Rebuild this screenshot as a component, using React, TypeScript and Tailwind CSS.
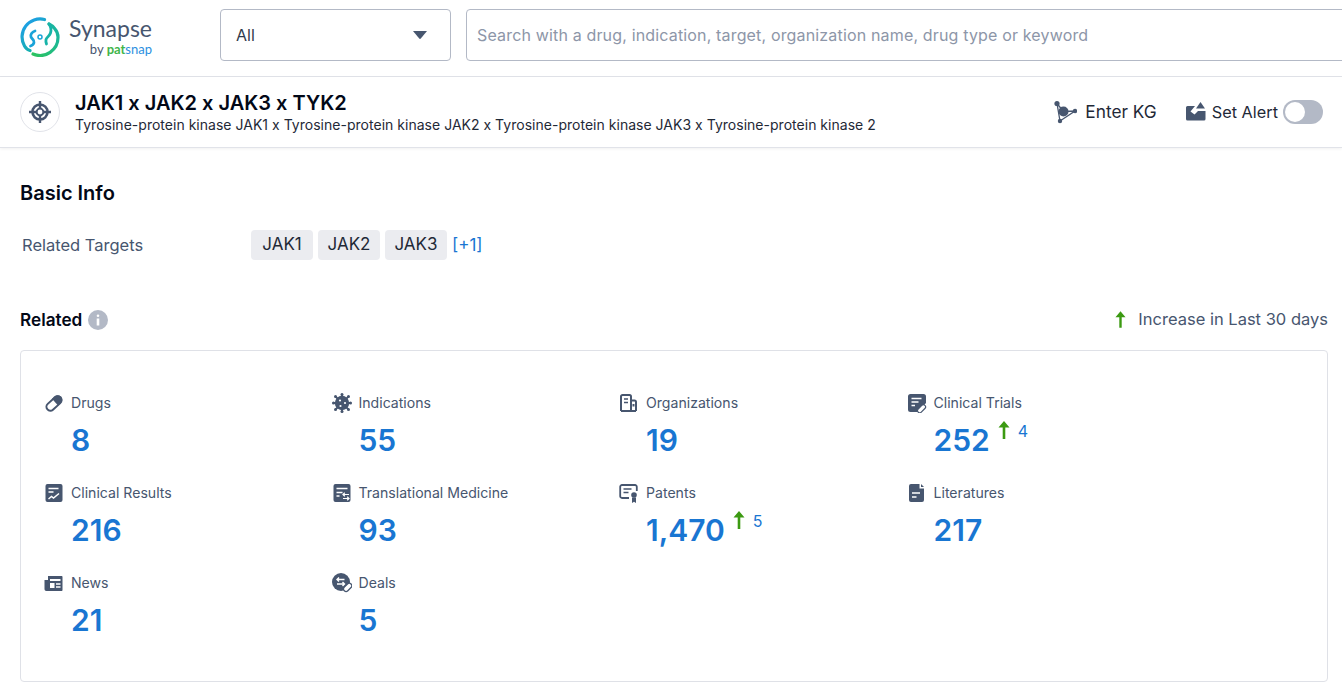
import type { ReactNode } from "react"

function Logo() {
  return (
    <svg width="40" height="40" viewBox="0 0 40 40" fill="none">
      <defs>
        <linearGradient id="logo-a" x1="0" y1="0" x2="0.6" y2="1">
          <stop offset="0" stopColor="#1e9bf0" />
          <stop offset="1" stopColor="#17b3a8" />
        </linearGradient>
        <linearGradient id="logo-b" x1="1" y1="0" x2="0" y2="1">
          <stop offset="0" stopColor="#17b3a8" />
          <stop offset="1" stopColor="#2cc35f" />
        </linearGradient>
      </defs>
      <path d="M24.500 2.500A18 18 0 0 0 4.500 29C6 31.500 8 33 10 33.500" stroke="url(#logo-a)" strokeWidth="3.200" strokeLinecap="round" />
      <path d="M29 7c3 1.500 9 6 9 13A18 18 0 0 1 13 37" stroke="url(#logo-b)" strokeWidth="3.200" strokeLinecap="round" />
      <path d="M15 14c-3 1-5 3.500-4 6s3.500 3 3 5.500c-.3 1.500-2 3-3.500 3.500" stroke="#1aa3d8" strokeWidth="2.800" strokeLinecap="round" />
      <path d="M29 7c2 3 2.500 6 1.500 9s-3.500 4-4.500 6.500c-.3 1.500 0 3 .5 4.500" stroke="#17b3a8" strokeWidth="2.800" strokeLinecap="round" />
      <circle cx="20" cy="20" r="2" stroke="#1aa3d8" strokeWidth="1.500" />
    </svg>
  )
}

function UpArrow({ className }: { className: string }) {
  return (
    <svg className={className} viewBox="0 0 12 18" fill="#3c9a12">
      <path d="M6 0 11.500 6.500H7.300V18H4.700V6.500H.5Z" />
    </svg>
  )
}

const ink = "#47566f"

const icons: Record<string, ReactNode> = {
  pill: (
    <>
      <rect x="1.200" y="6.600" width="17.600" height="7.800" rx="3.900" transform="rotate(-42 10 10.500)" fill="none" stroke={ink} strokeWidth="2" />
      <path d="M8 5.800 14 12.600 17 9.800C19 7.500 18.500 5 17 3.500 15 1.800 12.500 1.800 10.800 3.300Z" fill={ink} />
    </>
  ),
  virus: (
    <>
      <circle cx="10" cy="10" r="7.200" fill={ink} />
      <path d="M10 .8v18.400M.8 10h18.400M3.500 3.500l13 13M16.500 3.500l-13 13" stroke={ink} strokeWidth="1.800" />
      <circle cx="10" cy="1.500" r="1.500" fill={ink} />
      <circle cx="10" cy="18.500" r="1.500" fill={ink} />
      <circle cx="1.500" cy="10" r="1.500" fill={ink} />
      <circle cx="18.500" cy="10" r="1.500" fill={ink} />
      <circle cx="3.500" cy="3.500" r="1.500" fill={ink} />
      <circle cx="16.500" cy="3.500" r="1.500" fill={ink} />
      <circle cx="3.500" cy="16.500" r="1.500" fill={ink} />
      <circle cx="16.500" cy="16.500" r="1.500" fill={ink} />
      <circle cx="8" cy="7.500" r="1.100" fill="#fff" />
      <circle cx="13" cy="10" r="1.100" fill="#fff" />
      <circle cx="8.500" cy="13" r="1.100" fill="#fff" />
    </>
  ),
  org: (
    <>
      <path d="M2 18V3.500C2 2.700 2.700 2 3.500 2h7c.8 0 1.500.7 1.500 1.500V18M12 7.500h3.500c.8 0 1.500.7 1.500 1.500v9M2 18h15" fill="none" stroke={ink} strokeWidth="2" />
      <path d="M5 6h4M5 9.500h4" stroke={ink} strokeWidth="1.600" />
      <rect x="13.500" y="11" width="2" height="2.500" fill={ink} />
    </>
  ),
  trials: (
    <>
      <path d="M3.500 1h13A2.500 2.500 0 0 1 19 3.500V10l-8.500 9H3.500A2.500 2.500 0 0 1 1 16.500v-13A2.500 2.500 0 0 1 3.500 1Z" fill={ink} />
      <path d="M4.500 5.500h10M4.500 9h7M4.500 12.500h3.500" stroke="#fff" strokeWidth="1.500" />
      <rect x="9.800" y="13.600" width="9.500" height="4.400" rx="2.200" transform="rotate(-45 14.500 15.800)" fill="#fff" stroke={ink} strokeWidth="1.200" />
    </>
  ),
  results: (
    <>
      <rect x="1.500" y="1" width="17" height="18" rx="2" fill={ink} />
      <path d="M4.500 5.500h10M4.500 9h5" stroke="#fff" strokeWidth="1.600" />
      <path d="M4.500 16l3-2.500 2 1.500 5.500-4.500" fill="none" stroke="#fff" strokeWidth="1.500" />
    </>
  ),
  medicine: (
    <>
      <rect x="1.500" y="1" width="17" height="18" rx="2" fill={ink} />
      <path d="M4.500 5.500h11M4.500 9.500h6M4.500 13h3" stroke="#fff" strokeWidth="1.500" />
      <path d="M11 11.500h6M12.800 9.800 11 11.500l1.800 1.700M17 15.500h-6M15.200 13.800l1.800 1.700-1.800 1.700" fill="none" stroke="#fff" strokeWidth="1.200" />
    </>
  ),
  patents: (
    <>
      <path d="M10 15H3A1.800 1.800 0 0 1 1.200 13.200V3.800A1.800 1.800 0 0 1 3 2h13a1.800 1.800 0 0 1 1.800 1.800V8" fill="none" stroke={ink} strokeWidth="1.800" />
      <path d="M4.500 6h8M4.500 9.500h5" stroke={ink} strokeWidth="1.600" />
      <circle cx="15" cy="12" r="2.800" fill={ink} />
      <path d="M13 14.500V20l2-1.200 2 1.200v-5.500Z" fill={ink} />
    </>
  ),
  literature: (
    <>
      <path d="M4 1h8.500v4.500H17V17a2 2 0 0 1-2 2H4a2 2 0 0 1-2-2V3a2 2 0 0 1 2-2Z" fill={ink} />
      <path d="M14 1l3 3h-3Z" fill={ink} />
      <path d="M5 10h8M5 14h4.500" stroke="#fff" strokeWidth="1.600" />
    </>
  ),
  news: (
    <>
      <path d="M4 3h13.500c.6 0 1 .4 1 1v13c0 .6-.4 1-1 1H2.500C1.200 18 .5 17 .5 16V7H4Z" fill={ink} />
      <rect x="6" y="6" width="10.500" height="2" fill="#fff" />
      <rect x="6" y="10" width="4.500" height="5" fill="#fff" />
      <path d="M12 11h4.500M12 14h4.500" stroke="#fff" strokeWidth="1.500" />
    </>
  ),
  deals: (
    <>
      <circle cx="9" cy="9" r="9" fill={ink} />
      <path d="M5 6.500h7.500M7 4.500l-2 2 2 2M12.500 11H5M10.500 9l2 2-2 2" fill="none" stroke="#fff" strokeWidth="1.400" />
      <rect x="11" y="12" width="9.500" height="5" rx="2.500" transform="rotate(-45 15.500 14.500)" fill="#fff" stroke={ink} strokeWidth="1.300" />
    </>
  ),
}

const stats = [
  { icon: "pill", label: "Drugs", value: "8" },
  { icon: "virus", label: "Indications", value: "55" },
  { icon: "org", label: "Organizations", value: "19" },
  { icon: "trials", label: "Clinical Trials", value: "252", up: "4" },
  { icon: "results", label: "Clinical Results", value: "216" },
  { icon: "medicine", label: "Translational Medicine", value: "93" },
  { icon: "patents", label: "Patents", value: "1,470", up: "5" },
  { icon: "literature", label: "Literatures", value: "217" },
  { icon: "news", label: "News", value: "21" },
  { icon: "deals", label: "Deals", value: "5" },
]

export default function App() {
  return (
    <div className="h-[691px] w-[1342px] overflow-hidden bg-white font-[Inter,sans-serif] text-[#020817]">
      <header className="flex h-[77px] items-start border-b border-[#e1e3e9] pt-[9px]">
        <div className="flex w-[220px] shrink-0 items-center pl-5 pt-[7px]">
          <Logo />
          <div className="ml-[9px] flex flex-col items-end">
            <span className="font-[Lato,sans-serif] text-[23px] leading-[25px] text-[#47566f]">Synapse</span>
            <span className="font-[Lato,sans-serif] text-[13px] leading-[16px] text-[#47566f]">
              by <span className="font-bold text-[#3fb54a]">pat</span>
              <span className="text-[#2c8fe0]">snap</span>
            </span>
          </div>
        </div>
        <div className="flex h-[52px] w-[231px] shrink-0 items-center justify-between rounded border border-[#b3b9c6] pl-[15px] pr-[23px] text-[16px] text-[#2f3a4c]">
          All
          <svg width="14" height="8" viewBox="0 0 14 8" fill="#47566f">
            <path d="M0 0h14L8 7.300a1.300 1.300 0 0 1-2 0Z" />
          </svg>
        </div>
        <div className="ml-[15px] flex h-[52px] w-[900px] shrink-0 items-center rounded border border-[#b3b9c6] pl-[10px] text-[16px] tracking-[0.16px] text-[#8d96a8]">
          Search with a drug, indication, target, organization name, drug type or keyword
        </div>
      </header>

      <div className="flex h-[71px] items-center justify-between border-b border-[#e1e3e9] pl-5 pr-[19px] shadow-[0_1px_3px_rgba(0,0,0,0.06)]">
        <div className="flex items-center">
          <div className="flex size-10 items-center justify-center rounded-full border border-[#e1e3e9]">
            <svg width="24" height="24" viewBox="0 0 24 24" fill="none" stroke="#47566f">
              <circle cx="12" cy="12" r="7.500" strokeWidth="2.600" />
              <circle cx="12" cy="12" r="3.400" strokeWidth="2" />
              <path d="M12 1v7M12 16v7M1 12h7M16 12h7" strokeWidth="2.400" />
            </svg>
          </div>
          <div className="ml-[15px] mt-[2px]">
            <div className="text-[20px] font-semibold leading-[24px]">JAK1 x JAK2 x JAK3 x TYK2</div>
            <div className="text-[14px] leading-[20px] tracking-[0.02px] text-[#1f2937]">
              Tyrosine-protein kinase JAK1 x Tyrosine-protein kinase JAK2 x Tyrosine-protein kinase JAK3 x Tyrosine-protein kinase 2
            </div>
          </div>
        </div>
        <div className="flex items-center text-[#1f2937]">
          <svg width="24" height="24" viewBox="0 0 24 24" fill="#47566f">
            <circle cx="10.500" cy="11.500" r="5" />
            <circle cx="4" cy="3.500" r="2.600" />
            <circle cx="22" cy="11" r="2.200" />
            <circle cx="7" cy="21" r="2.200" />
            <path d="M4 3.500 10.500 11.500 22 11 7 21Z" fill="none" stroke="#47566f" strokeWidth="1.300" />
          </svg>
          <span className="ml-[8px] text-[17.300px]">Enter KG</span>
          <svg className="ml-[29px]" width="20" height="20" viewBox="0 0 20 20" fill="#47566f">
            <path d="M1.500 4H9L4.500 9.500l4 3 3.500-3.500 7.500 0V17a1.500 1.500 0 0 1-1.500 1.500H1.500A1.500 1.500 0 0 1 0 17V5.500A1.500 1.500 0 0 1 1.500 4Z" />
            <path d="M14.500 0 19 6.500H10Z" />
          </svg>
          <span className="ml-[6px] text-[16.300px]">Set Alert</span>
          <div className="ml-[5px] flex h-6 w-10 items-center rounded-full bg-[#b3b9c6] pl-[2px]">
            <div className="size-5 rounded-full bg-white" />
          </div>
        </div>
      </div>

      <main className="pl-5 pr-[14px]">
        <h2 className="mt-[33px] text-[20px] font-semibold leading-[24px]">Basic Info</h2>
        <div className="mt-[25px] flex h-[30px] items-center">
          <div className="w-[231px] shrink-0 pl-[2px] pt-[1px] text-[16.500px] text-[#47566f]">Related Targets</div>
          <div className="flex items-center gap-[5px]">
            {["JAK1", "JAK2", "JAK3"].map((t) => (
              <span key={t} className="flex h-[30px] w-[62px] items-center justify-center rounded bg-[#ebecf0] text-[17px] text-[#1f2937]">
                {t}
              </span>
            ))}
            <span className="pt-[1px] text-[17px] text-[#1976d2]">[+1]</span>
          </div>
        </div>

        <div className="mt-[44px] flex h-[30px] items-center justify-between">
          <div className="flex items-center pt-[2px] text-[17.200px] font-semibold">
            Related
            <span className="ml-[6px] flex size-5 items-center justify-center rounded-full bg-[#b3b9c6]">
              <svg width="4" height="12" viewBox="0 0 4 12" fill="#fff">
                <rect x="0.700" y="0.500" width="2.600" height="2.600" rx="1.300" />
                <rect x="0.700" y="4.500" width="2.600" height="7" />
              </svg>
            </span>
          </div>
          <div className="flex items-center text-[16.500px] text-[#47566f]">
            <UpArrow className="h-[17px] w-[11px]" />
            <span className="ml-[12px]">Increase in Last 30 days</span>
          </div>
        </div>

        <section className="mt-[16px] h-[332px] rounded border border-[#dfe1e7] pl-[23px] pt-[37px]">
          <div className="grid grid-cols-[repeat(4,287.500px)] auto-rows-[90px]">
            {stats.map((s) => (
              <div key={s.label}>
                <div className="flex h-[30px] items-center">
                  <svg width="20" height="20" viewBox="0 0 20 20" className="shrink-0">
                    {icons[s.icon]}
                  </svg>
                  <span className="ml-[7px] text-[14.100px] text-[#47566f]">{s.label}</span>
                </div>
                <div className="flex items-start pl-[27px] pt-[4px]">
                  <span className="text-[30px] font-semibold leading-[36px] text-[#1976d2]">{s.value}</span>
                  {s.up && (
                    <>
                      <UpArrow className="ml-[8px] mt-[-2px] h-[20px] w-[12px]" />
                      <span className="ml-[8px] mt-[-1px] text-[16px] leading-[20px] text-[#1976d2]">{s.up}</span>
                    </>
                  )}
                </div>
              </div>
            ))}
          </div>
        </section>
      </main>
    </div>
  )
}
